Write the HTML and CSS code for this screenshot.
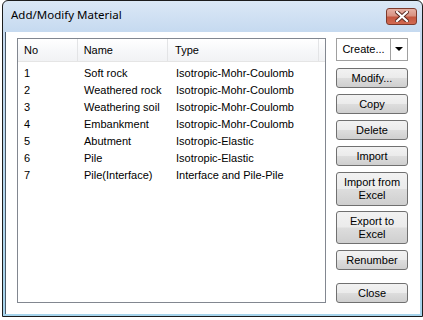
FILE: index.html
```html
<!DOCTYPE html>
<html lang="en">
<head>
    <meta charset="UTF-8">
    <title>Add/Modify Material</title>
    <link rel="stylesheet" href="styles.css">
</head>
<body>

    <div class="window">
        <!-- Title bar -->
        <div class="titlebar">
            <span class="title">Add/Modify Material</span>
            <div class="closeBtn">
                <svg width="14" height="11" viewBox="0 0 14 11">
                    <path d="M2 1 L12 10 M12 1 L2 10" stroke="#5a2a22" stroke-width="4" stroke-linecap="square"/>
                    <path d="M2 1 L12 10 M12 1 L2 10" stroke="#ffffff" stroke-width="2.2" stroke-linecap="square"/>
                </svg>
            </div>
        </div>

        <div class="client">
            <!-- Material list -->
            <div class="listBox">
                <div class="listHeader">
                    <div class="col colNo">No</div>
                    <div class="col colName">Name</div>
                    <div class="col colType">Type</div>
                    <div class="col colRest"></div>
                </div>
                <div class="listRow"><div class="col colNo">1</div><div class="col colName">Soft rock</div><div class="col colType">Isotropic-Mohr-Coulomb</div></div>
                <div class="listRow"><div class="col colNo">2</div><div class="col colName">Weathered rock</div><div class="col colType">Isotropic-Mohr-Coulomb</div></div>
                <div class="listRow"><div class="col colNo">3</div><div class="col colName">Weathering soil</div><div class="col colType">Isotropic-Mohr-Coulomb</div></div>
                <div class="listRow"><div class="col colNo">4</div><div class="col colName">Embankment</div><div class="col colType">Isotropic-Mohr-Coulomb</div></div>
                <div class="listRow"><div class="col colNo">5</div><div class="col colName">Abutment</div><div class="col colType">Isotropic-Elastic</div></div>
                <div class="listRow"><div class="col colNo">6</div><div class="col colName">Pile</div><div class="col colType">Isotropic-Elastic</div></div>
                <div class="listRow"><div class="col colNo">7</div><div class="col colName">Pile(Interface)</div><div class="col colType">Interface and Pile-Pile</div></div>
            </div>

            <!-- Command buttons -->
            <div class="buttons">
                <div class="splitBtn">
                    <span class="splitMain">Create...</span>
                    <span class="splitArrow"></span>
                </div>
                <button class="btn btnModify">Modify...</button>
                <button class="btn">Copy</button>
                <button class="btn">Delete</button>
                <button class="btn">Import</button>
                <button class="btn btnTall">Import from<br>Excel</button>
                <button class="btn btnTall btnExport">Export to<br>Excel</button>
                <button class="btn btnRenumber">Renumber</button>
                <button class="btn btnClose">Close</button>
            </div>
        </div>
    </div>

</body>
</html>
```

FILE: styles.css
```css
/* Page */
body {
    margin: 0;
    padding: 0;
    background: #ffffff;
    font-family: 'Liberation Sans', Arial, sans-serif;
    font-size: 11px;
    color: #000000;
}

/* Dialog frame */
.window {
    margin-left: 2px;
    width: 419px;
    height: 315px;
    border: 1px solid #1c1c1c;
    border-radius: 6px 6px 0 0;
    background: linear-gradient(to bottom, #dbe8f6 0px, #c6daf0 30px, #a6d4ec 100%);
    display: flex;
    flex-direction: column;
    overflow: hidden;
}

.titlebar {
    height: 30px;
    display: flex;
    align-items: flex-start;
    justify-content: space-between;
    padding: 0 5px 0 8px;
}

.title {
    font-family: 'Noto Sans', sans-serif;
    font-size: 11.5px;
    margin-top: 6px;
    color: #000000;
}

.closeBtn {
    width: 29px;
    height: 15px;
    margin-top: 7px;
    border: 1px solid #7d3a2c;
    border-radius: 3px;
    background: linear-gradient(to bottom, #e6b0a4 0%, #d89282 45%, #c4563f 55%, #d26a52 100%);
    display: flex;
    align-items: center;
    justify-content: center;
}

/* Client area */
.client {
    flex: 1;
    margin: 1px 2px 2px 2px;
    background: #ffffff;
    display: flex;
    padding: 6px 0 0 11px;
    border-left: 1px solid #4a5a6a;
}

/* Listview */
.listBox {
    width: 307px;
    height: 263px;
    border: 1px solid #828790;
    background: #ffffff;
}

.listHeader {
    display: flex;
    height: 22px;
    background: linear-gradient(to bottom, #ffffff 0%, #f7f8fa 50%, #f1f2f4 100%);
    border-bottom: 1px solid #e5e5e5;
    margin-bottom: 3px;
}

.listHeader .col {
    border-right: 1px solid #e3e4e6;
    line-height: 22px;
}

.listHeader .colRest {
    flex: 1;
    border-right: none;
}

.col {
    padding-left: 6px;
    box-sizing: border-box;
    white-space: nowrap;
}

.colNo {
    width: 60px;
}

.colName {
    width: 91px;
}

.colType {
    width: 152px;
    padding-left: 7px;
}

.listRow {
    display: flex;
    height: 17px;
    line-height: 17px;
}

/* Buttons */
.buttons {
    width: 72px;
    margin-left: 10px;
    display: flex;
    flex-direction: column;
}

.splitBtn {
    height: 21px;
    border: 1px solid #a0a0a0;
    background: #ffffff;
    display: flex;
    box-sizing: content-box;
}

.splitMain {
    flex: 1;
    text-align: center;
    line-height: 21px;
    border-right: 1px solid #a0a0a0;
}

.splitArrow {
    width: 16px;
    position: relative;
}

.splitArrow::after {
    content: "";
    position: absolute;
    left: 4px;
    top: 8px;
    border-left: 4px solid transparent;
    border-right: 4px solid transparent;
    border-top: 4px solid #000000;
}

.btn {
    font-family: 'Liberation Sans', Arial, sans-serif;
    font-size: 11px;
    color: #000000;
    width: 72px;
    height: 20px;
    margin: 6px 0 0 0;
    padding: 0;
    border: 1px solid #707070;
    border-radius: 3px;
    background: linear-gradient(to bottom, #f2f2f2 0%, #ebebeb 49%, #dddddd 51%, #cfcfcf 100%);
    line-height: 13px;
}

.btnModify {
    margin-top: 7px;
}

.btnTall {
    height: 34px;
}

.btnExport {
    margin-top: 5px;
    height: 33px;
}

.btnRenumber {
    margin-top: 6px;
}

.btnClose {
    margin-top: 13px;
}
```
